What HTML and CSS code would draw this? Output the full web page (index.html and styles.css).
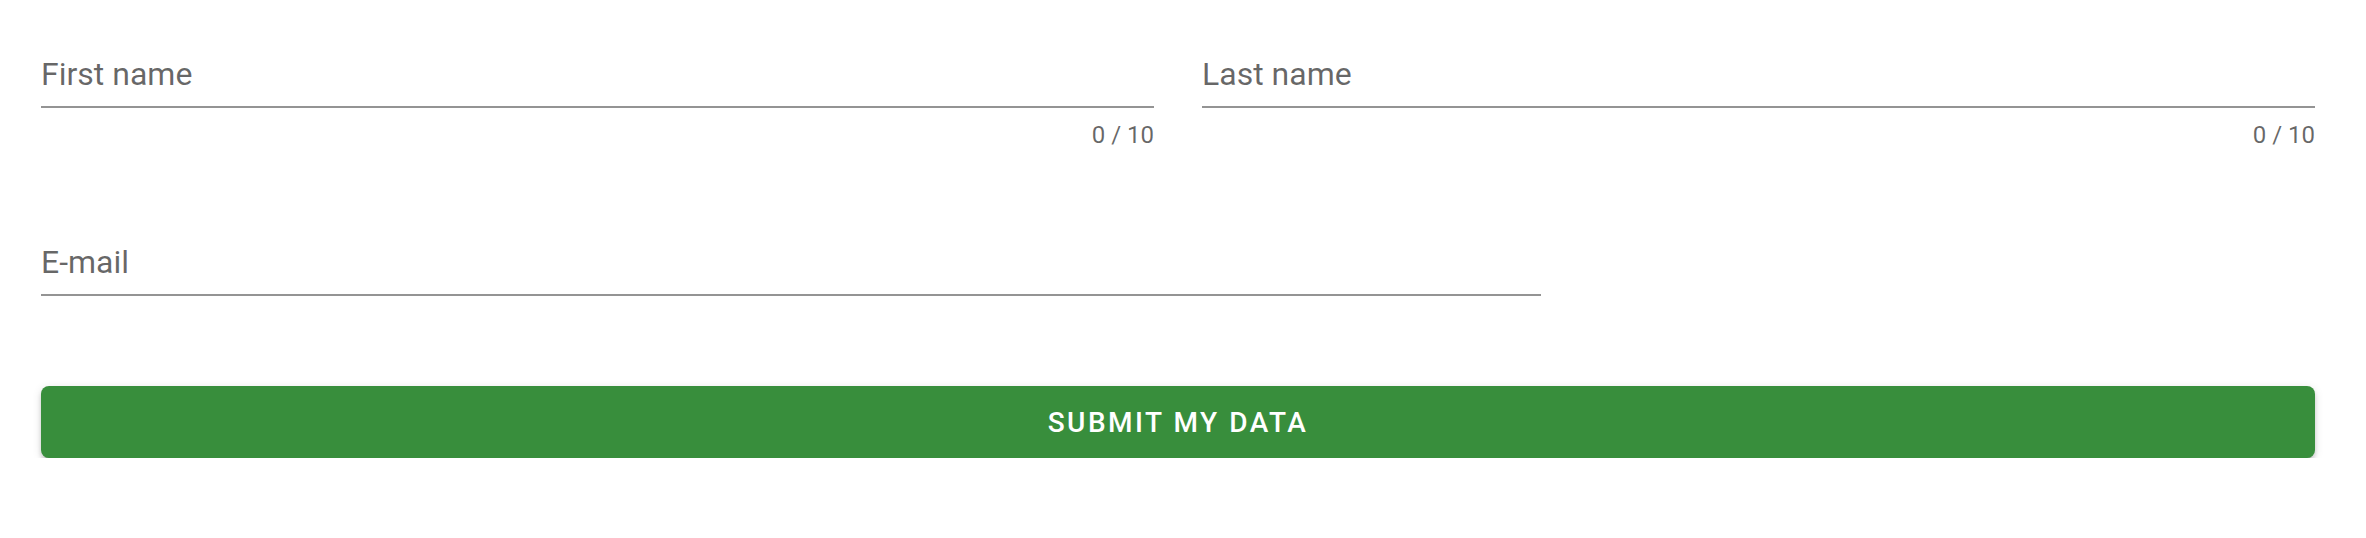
FILE: index.html
```html
<!DOCTYPE html>
<html>
<head>
<meta charset="utf-8">
<link rel="stylesheet" href="styles.css">
</head>
<body>
<form class="form">
  <div class="row row-names">
    <div class="col col-6">
      <div class="field"><span class="label">First name</span></div>
      <div class="details"><span class="counter">0 / 10</span></div>
    </div>
    <div class="col col-6">
      <div class="field"><span class="label">Last name</span></div>
      <div class="details"><span class="counter">0 / 10</span></div>
    </div>
  </div>
  <div class="row row-email">
    <div class="col col-8">
      <div class="field"><span class="label">E-mail</span></div>
    </div>
  </div>
  <div class="row row-submit">
    <div class="col col-12">
      <button type="button" class="btn">Submit my data</button>
    </div>
  </div>
</form>
</body>
</html>
```
FILE: styles.css
```css
html, body {
  margin: 0;
  padding: 0;
  background: #ffffff;
}
body {
  font-family: Roboto, "Liberation Sans", sans-serif;
  color: rgba(0, 0, 0, 0.87);
}
.form {
  width: 2322px;
  padding: 0 0 0 17px;
}
.row {
  display: flex;
}
.col {
  box-sizing: border-box;
  padding: 0 24px;
}
.col-6 { flex: 0 0 50%; }
.col-8 { flex: 0 0 66.6667%; }
.col-12 { flex: 0 0 100%; }
.row-names { padding-top: 38px; }
.row-email { padding-top: 77px; }
.row-submit { padding-top: 90px; }
.field {
  padding: 16px 0 12px;
  border-bottom: 2px solid #949494;
}
.label {
  display: block;
  font-size: 32px;
  line-height: 40px;
  color: rgba(0, 0, 0, 0.6);
}
.details {
  margin-top: 13px;
  display: flex;
  justify-content: flex-end;
}
.counter {
  font-size: 24px;
  line-height: 28px;
  color: rgba(0, 0, 0, 0.6);
}
.btn {
  display: flex;
  align-items: center;
  justify-content: center;
  width: 100%;
  height: 72px;
  border: 0;
  border-radius: 8px;
  background: #388e3c;
  color: #ffffff;
  font-family: Roboto, "Liberation Sans", sans-serif;
  font-size: 28px;
  font-weight: 500;
  letter-spacing: 0.0892857em;
  text-transform: uppercase;
  box-shadow: 0 6px 2px -4px rgba(0, 0, 0, 0.2), 0 4px 4px 0 rgba(0, 0, 0, 0.14), 0 2px 10px 0 rgba(0, 0, 0, 0.12);
  padding: 0;
}
```
